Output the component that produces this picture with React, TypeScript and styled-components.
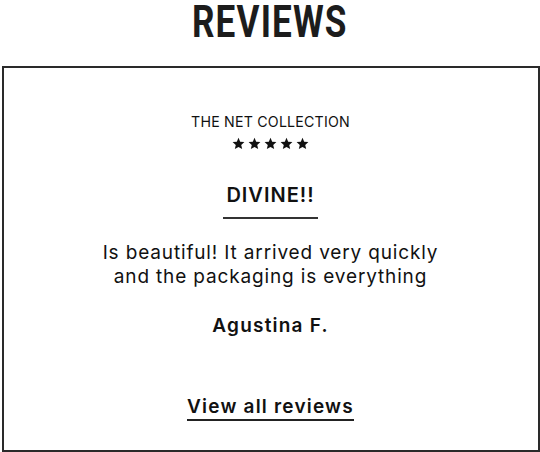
import React from "react";
import styled, { createGlobalStyle } from "styled-components";

const Global = createGlobalStyle`
  html, body { margin: 0; padding: 0; background: #fff; }
  body { font-family: "Inter", "Open Sans", sans-serif; color: #111; }
`;

const Page = styled.div`
  width: 540px;
  height: 452px;
  display: flex;
  flex-direction: column;
  align-items: center;
  box-sizing: border-box;
`;

const Title = styled.h1`
  margin: 0;
  height: 66px;
  padding-top: 2px;
  box-sizing: border-box;
  display: flex;
  align-items: flex-start;
  justify-content: center;
  font-family: "Roboto", "Liberation Sans", sans-serif;
  font-weight: 700;
  font-size: 45px;
  line-height: 40px;
  letter-spacing: 1.5px;
  color: #1c1c1c;
  transform: scaleX(0.78);
`;

const Card = styled.section`
  width: 538px;
  flex: 1;
  margin-left: 1px;
  border: 2px solid #2a2a2a;
  box-sizing: border-box;
  display: flex;
  flex-direction: column;
  align-items: center;
  padding-top: 45px;
`;

const Collection = styled.div`
  font-size: 14.2px;
  letter-spacing: 0.2px;
  line-height: 18px;
  color: #111;
`;

const Stars = styled.div`
  display: flex;
  gap: 3px;
  margin-top: 6px;
`;

const Headline = styled.h2`
  margin: 33px 0 0;
  font-size: 20px;
  font-weight: 600;
  line-height: 24px;
  padding: 0 3px 10px;
  border-bottom: 2px solid #333;
  letter-spacing: 1px;
`;

const Body = styled.p`
  margin: 22px 0 0;
  font-size: 19px;
  line-height: 24px;
  text-align: center;
  font-weight: 400;
  letter-spacing: 0.85px;
  color: #111;
`;

const Author = styled.div`
  margin-top: 25px;
  font-size: 19px;
  font-weight: 600;
  line-height: 24px;
  letter-spacing: 1.2px;
`;

const ViewAll = styled.a`
  margin-top: 57px;
  font-size: 19px;
  font-weight: 600;
  line-height: 24px;
  color: #111;
  text-decoration: none;
  border-bottom: 2px solid #222;
  letter-spacing: 1.2px;
`;

const Star = () => (
  <svg width="13" height="13" viewBox="0 0 24 24">
    <path
      d="M12 1.5l3.1 7.2 7.8.7-5.9 5.2 1.8 7.7L12 18.3l-6.8 4 1.8-7.7-5.9-5.2 7.8-.7z"
      fill="#111"
    />
  </svg>
);

export default function App() {
  return (
    <>
      <Global />
      <Page>
        <Title>REVIEWS</Title>
        <Card>
          <Collection>THE NET COLLECTION</Collection>
          <Stars>
            {[0, 1, 2, 3, 4].map((i) => (
              <Star key={i} />
            ))}
          </Stars>
          <Headline>DIVINE!!</Headline>
          <Body>
            Is beautiful! It arrived very quickly
            <br />
            and the packaging is everything
          </Body>
          <Author>Agustina F.</Author>
          <ViewAll href="#">View all reviews</ViewAll>
        </Card>
      </Page>
    </>
  );
}
